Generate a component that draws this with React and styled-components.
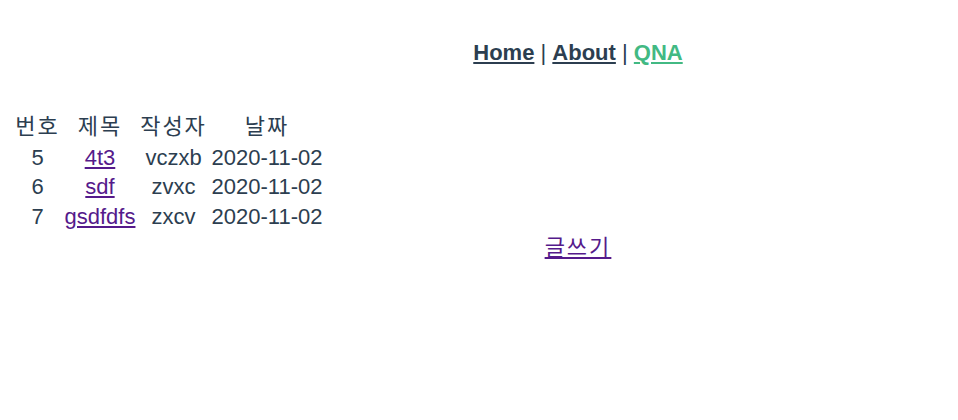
import React from "react";
import styled, { createGlobalStyle } from "styled-components";

const posts = [
  { id: 5, title: "4t3", writer: "vczxb", date: "2020-11-02" },
  { id: 6, title: "sdf", writer: "zvxc", date: "2020-11-02" },
  { id: 7, title: "gsdfdfs", writer: "zxcv", date: "2020-11-02" },
];

const App = () => {
  return (
    <>
      <GlobalStyle />
      <Container>
        <Nav>
          <NavLink href="#">Home</NavLink> | <NavLink href="#">About</NavLink> |{" "}
          <NavLink href="#" $active>
            QNA
          </NavLink>
        </Nav>
        <Board>
          <thead>
            <tr>
              <Th>번호</Th>
              <Th>제목</Th>
              <Th>작성자</Th>
              <Th>날짜</Th>
            </tr>
          </thead>
          <tbody>
            {posts.map((post) => (
              <tr key={post.id}>
                <Td>{post.id}</Td>
                <Td>
                  <PostLink href="#">{post.title}</PostLink>
                </Td>
                <Td>{post.writer}</Td>
                <Td>{post.date}</Td>
              </tr>
            ))}
          </tbody>
        </Board>
        <WriteBar>
          <PostLink href="#" $wide>
            글쓰기
          </PostLink>
        </WriteBar>
      </Container>
    </>
  );
};

const GlobalStyle = createGlobalStyle`
  html, body {
    margin: 0;
    overflow: hidden;
    background: #fff;
  }
`;

const Container = styled.div`
  width: 1134px;
  padding: 0 11px;
  font-family: "Liberation Sans", Arial, "Noto Sans CJK KR", sans-serif;
  font-size: 22px;
  color: #2c3e50;
  text-align: center;
  -webkit-font-smoothing: antialiased;
`;

const Nav = styled.div`
  padding: 39.5px 0 45px;
  line-height: 25px;
`;

const NavLink = styled.a`
  font-weight: bold;
  color: ${(props) => (props.$active ? "#42b983" : "#2c3e50")};
`;

const Board = styled.table`
  margin-left: 1px;
  border-spacing: 2.7px;
  font-size: 22px;
`;

const Th = styled.th`
  padding: 1.35px;
  font-weight: normal;
  line-height: 27px;
  letter-spacing: 2px;
  text-align: center;
`;

const Td = styled.td`
  padding: 1.35px;
  line-height: 25px;
  text-align: center;
`;

const PostLink = styled.a`
  color: #551a8b;
  letter-spacing: ${(props) => (props.$wide ? "2px" : "normal")};
`;

const WriteBar = styled.div`
  line-height: 31px;
`;

export default App;
